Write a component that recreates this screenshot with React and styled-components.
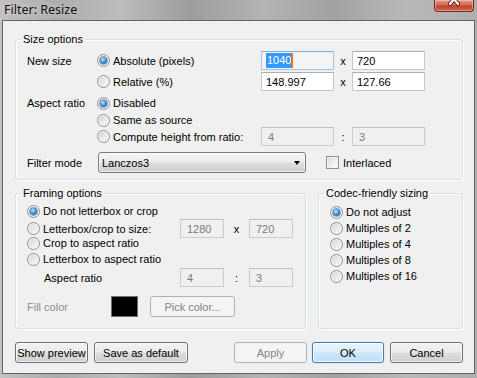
import React from 'react';
import styled, { createGlobalStyle, css } from 'styled-components';

const Global = createGlobalStyle`
  html, body { margin: 0; padding: 0; background: #b4b4b4; }
  body { font-family: "Liberation Sans", Arial, sans-serif; font-size: 11px; color: #000; }
  * { box-sizing: border-box; }
`;

const Window = styled.div`
  width: 477px;
  height: 378px;
  padding: 0 2px 4px 2px;
  display: flex;
  flex-direction: column;
  background: linear-gradient(90deg, #c2c2c2 0%, #acacac 12%, #bdbdbd 25%, #9d9d9d 40%, #b3b3b3 55%, #a2a2a2 70%, #b9b9b9 85%, #aeaeae 100%);
`;

const TitleBar = styled.div`
  height: 20px;
  display: flex;
  align-items: flex-start;
  justify-content: space-between;
`;

const Title = styled.div`
  font-family: "Noto Sans", "Open Sans", sans-serif;
  font-size: 12.5px;
  line-height: 20px;
  padding-left: 2px;
  color: #101010;
  text-shadow: 0 0 6px rgba(255,255,255,0.55);
`;

const CloseBtn = styled.div`
  width: 40px;
  height: 12px;
  margin-right: 1px;
  border: 1px solid #6e2a1e;
  border-top: none;
  border-radius: 0 0 4px 4px;
  background: linear-gradient(180deg, #e0968a 0%, #cf6a55 45%, #c2432b 55%, #d0654a 100%);
  box-shadow: inset 0 0 0 1px rgba(255,255,255,0.35);
  display: flex;
  justify-content: center;
`;

const Client = styled.div`
  flex: 1;
  border: 1px solid #646464;
  background: #f0f0f0;
  padding: 12px 11px 0 12px;
  display: flex;
  flex-direction: column;
`;

const Group = styled.fieldset`
  margin: 0;
  padding: 0;
  min-width: 0;
  border: 1px solid #d5dfe5;
  border-radius: 3px;
  box-shadow: inset 1px 1px 0 #fff, 1px 1px 0 #fff;
  flex: ${p => p.$flex || 'none'};
  width: ${p => p.$w || 'auto'};
`;

const Legend = styled.legend`
  margin-left: 5px;
  padding: 0 2px;
  line-height: 13px;
  font-size: 11px;
`;

const Body = styled.div`
  padding: ${p => p.$pad};
  display: flex;
  flex-direction: column;
`;

const SizeRow = styled.div`
  display: grid;
  grid-template-columns: 70px 164px 73px 18px 73px;
  align-items: center;
  height: ${p => p.$h}px;
  margin-top: ${p => p.$mt || 0}px;
`;

const FrameRow = styled.div`
  display: grid;
  grid-template-columns: 153px 44px 25px 44px;
  align-items: center;
  height: ${p => p.$h}px;
  margin-top: ${p => p.$mt || 0}px;
`;

const FlexRow = styled.div`
  display: flex;
  align-items: center;
  height: ${p => p.$h}px;
  margin-top: ${p => p.$mt || 0}px;
`;

const Label = styled.span`
  white-space: nowrap;
  padding-left: ${p => p.$pl || 0}px;
  color: ${p => (p.$disabled ? '#8d8d8d' : '#000')};
  width: ${p => (p.$w ? p.$w + 'px' : 'auto')};
  flex: none;
`;

const Sep = styled.span`
  text-align: center;
  padding-left: ${p => p.$pl || 0}px;
`;

const Option = styled.label`
  display: flex;
  align-items: center;
  gap: 3px;
  white-space: nowrap;
  height: 16px;
  padding-left: ${p => p.$pl || 0}px;
`;

const RadioDot = styled.span`
  width: 13px;
  height: 13px;
  border-radius: 50%;
  flex: none;
  position: relative;
  border: 1px solid #8f9090;
  background: linear-gradient(135deg, #cfcfcf 0%, #ececec 60%, #fafafa 100%);
  box-shadow: inset 0 0 0 1px #f6f6f6;
  ${p => p.$on && css`
    &::after {
      content: '';
      position: absolute;
      left: 2px;
      top: 2px;
      width: 7px;
      height: 7px;
      border-radius: 50%;
      background: radial-gradient(circle at 40% 35%, #c4e6ff 0%, #3f98e0 45%, #1a5b98 100%);
      box-shadow: 0 0 0 0.5px #174f85;
    }
  `}
`;

const CheckBox = styled.span`
  width: 13px;
  height: 13px;
  flex: none;
  border: 1px solid #8f8f8f;
  background: linear-gradient(135deg, #d8d8d8 0%, #f4f4f4 70%, #ffffff 100%);
  box-shadow: inset 0 0 0 1px #f4f4f4;
`;

const Input = styled.div`
  height: 19px;
  width: ${p => p.$w || 73}px;
  display: flex;
  align-items: center;
  padding-left: ${p => (p.$disabled ? 6 : 4)}px;
  border: 1px solid ${p => (p.$focus ? '#9cc4ea' : p.$disabled ? '#cbcbcb' : '#c4c7cd')};
  border-top-color: ${p => (p.$focus ? '#7fb0df' : p.$disabled ? '#bfbfbf' : '#abadb3')};
  background: ${p => (p.$disabled ? '#f0f0f0' : p.$focus ? '#f4f4f4' : '#fff')};
  color: ${p => (p.$disabled ? '#7a7a7a' : '#000')};
  border-radius: 1px;
  white-space: nowrap;
`;

const Selected = styled.span`
  background: #3399ff;
  color: #fff;
  padding: 1px 0 1px 1px;
  line-height: 13px;
`;

const Caret = styled.span`
  display: inline-block;
  width: 2px;
  height: 15px;
  background: #e8741c;
`;

const Select = styled.div`
  width: 208px;
  height: 21px;
  margin-left: 1px;
  border: 1px solid #7a7a7a;
  border-radius: 3px;
  background: linear-gradient(180deg, #f4f4f4 0%, #ececec 48%, #dedede 52%, #d0d0d0 100%);
  box-shadow: inset 0 0 0 1px rgba(255,255,255,0.6);
  display: flex;
  align-items: center;
  justify-content: space-between;
  padding: 0 5px 0 3px;
`;

const Arrow = styled.span`
  width: 0;
  height: 0;
  border-left: 3.5px solid transparent;
  border-right: 3.5px solid transparent;
  border-top: 4px solid #000;
`;

const Interlace = styled.label`
  display: flex;
  align-items: center;
  gap: 4px;
  margin-left: 20px;
`;

const BottomRow = styled.div`
  display: flex;
  gap: 12px;
  margin-top: 7px;
`;

const Swatch = styled.span`
  width: 27px;
  height: 21px;
  background: #000;
  border: 1px solid #6f6f6f;
  flex: none;
`;

const ButtonRow = styled.div`
  display: flex;
  align-items: center;
  margin-top: 13px;
`;

const Button = styled.div`
  width: ${p => p.$w}px;
  height: 21px;
  margin-left: ${p => p.$ml || 0}px;
  border-radius: 3px;
  display: flex;
  align-items: center;
  justify-content: center;
  white-space: nowrap;
  flex: none;
  border: 1px solid #707070;
  color: #000;
  background: linear-gradient(180deg, #f2f2f2 0%, #ebebeb 48%, #dddddd 52%, #cfcfcf 100%);
  box-shadow: inset 0 0 0 1px rgba(255,255,255,0.7);
  ${p => p.$default && css`
    border-color: #3c7fb1;
    background: linear-gradient(180deg, #eaf5fd 0%, #dcedfb 48%, #cde5f8 52%, #c2def6 100%);
    box-shadow: inset 0 0 0 1px rgba(255,255,255,0.8), 0 0 1px #6fb6ea;
  `}
  ${p => p.$disabled && css`
    border-color: #adb2b5;
    background: #f4f4f4;
    color: #838383;
    box-shadow: none;
  `}
`;

const Spacer = styled.div`
  flex: 1;
`;

const Radio = ({ on, children, pl }) => (
  <Option $pl={pl}>
    <RadioDot $on={on} />
    <span>{children}</span>
  </Option>
);

export default function App() {
  return (
    <>
      <Global />
      <Window>
        <TitleBar>
          <Title>Filter: Resize</Title>
          <CloseBtn>
            <svg width="20" height="11" viewBox="0 0 20 11">
              <path d="M6 -6 L14 4 M14 -6 L6 4" stroke="#5a1a10" strokeWidth="4" strokeLinecap="round" />
              <path d="M6 -6 L14 4 M14 -6 L6 4" stroke="#ffffff" strokeWidth="2.2" strokeLinecap="round" />
            </svg>
          </CloseBtn>
        </TitleBar>
        <Client>
          <Group>
            <Legend>Size options</Legend>
            <Body $pad="5px 11px 6px 11px">
              <SizeRow $h={19}>
                <Label>New size</Label>
                <Radio on>Absolute (pixels)</Radio>
                <Input $focus><Selected>1040</Selected><Caret /></Input>
                <Sep>x</Sep>
                <Input>720</Input>
              </SizeRow>
              <SizeRow $h={19} $mt={2}>
                <span />
                <Radio>Relative (%)</Radio>
                <Input>148.997</Input>
                <Sep>x</Sep>
                <Input>127.66</Input>
              </SizeRow>
              <SizeRow $h={16} $mt={4}>
                <Label>Aspect ratio</Label>
                <Radio on>Disabled</Radio>
              </SizeRow>
              <SizeRow $h={15} $mt={1}>
                <span />
                <Radio>Same as source</Radio>
              </SizeRow>
              <SizeRow $h={19}>
                <span />
                <Radio>Compute height from ratio:</Radio>
                <Input $disabled>4</Input>
                <Sep>:</Sep>
                <Input $disabled>3</Input>
              </SizeRow>
              <FlexRow $h={21} $mt={6}>
                <Label $w={70}>Filter mode</Label>
                <Select>
                  <span>Lanczos3</span>
                  <Arrow />
                </Select>
                <Interlace>
                  <CheckBox />
                  <span>Interlaced</span>
                </Interlace>
              </FlexRow>
            </Body>
          </Group>
          <BottomRow>
            <Group $w="291px">
              <Legend>Framing options</Legend>
              <Body $pad="3px 11px 11px 11px">
                <Radio on>Do not letterbox or crop</Radio>
                <FrameRow $h={16}>
                  <Radio>Letterbox/crop to size:</Radio>
                  <Input $w={44} $disabled>1280</Input>
                  <Sep>x</Sep>
                  <Input $w={44} $disabled>720</Input>
                </FrameRow>
                <Radio>Crop to aspect ratio</Radio>
                <Radio>Letterbox to aspect ratio</Radio>
                <FrameRow $h={19} $mt={1}>
                  <Label $pl={17}>Aspect ratio</Label>
                  <Input $w={44} $disabled>4</Input>
                  <Sep>:</Sep>
                  <Input $w={44} $disabled>3</Input>
                </FrameRow>
                <FlexRow $h={21} $mt={9}>
                  <Label $disabled $w={84}>Fill color</Label>
                  <Swatch />
                  <Button $w={85} $ml={12} $disabled>Pick color...</Button>
                </FlexRow>
              </Body>
            </Group>
            <Group $flex="1">
              <Legend>Codec-friendly sizing</Legend>
              <Body $pad="4px 11px 11px 11px">
                <Radio on>Do not adjust</Radio>
                <Radio>Multiples of 2</Radio>
                <Radio>Multiples of 4</Radio>
                <Radio>Multiples of 8</Radio>
                <Radio>Multiples of 16</Radio>
              </Body>
            </Group>
          </BottomRow>
          <ButtonRow>
            <Button $w={73}>Show preview</Button>
            <Button $w={94} $ml={6}>Save as default</Button>
            <Spacer />
            <Button $w={73} $disabled>Apply</Button>
            <Button $w={72} $ml={5} $default>OK</Button>
            <Button $w={73} $ml={6}>Cancel</Button>
          </ButtonRow>
        </Client>
      </Window>
    </>
  );
}
